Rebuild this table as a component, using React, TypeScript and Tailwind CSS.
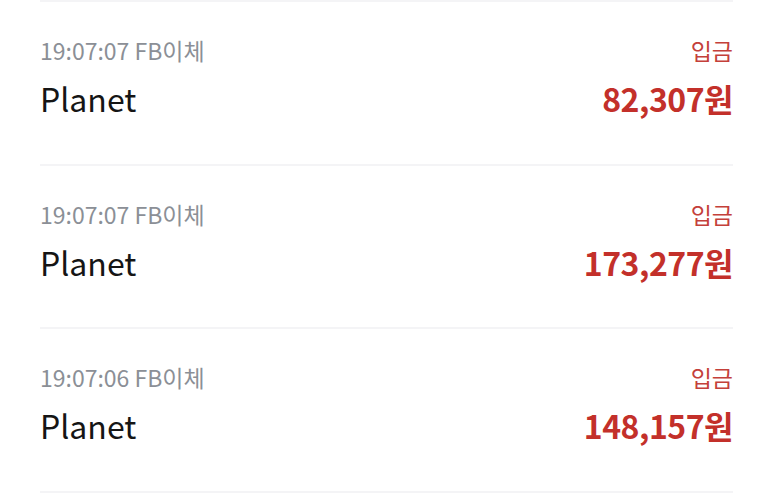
const rows = [
  { time: '19:07:07', name: 'Planet', amount: '82,307' },
  { time: '19:07:07', name: 'Planet', amount: '173,277' },
  { time: '19:07:06', name: 'Planet', amount: '148,157' },
];

export default function App() {
  return (
    <main
      className="h-[495px] w-[773px] overflow-hidden bg-white px-10"
      style={{ fontFamily: '"Noto Sans CJK KR", "Noto Sans", sans-serif' }}
    >
      <div className="border-t-2 border-[#f4f4f6]">
        {rows.map((r, i) => (
          <div key={i} className="flex h-[163.5px] flex-col border-b-2 border-[#f4f4f6] pt-[34px]">
            <div className="flex items-center justify-between text-[23px] leading-[28px]">
              <span className="text-[#8b8f96]">{r.time} FB이체</span>
              <span className="text-[#c4403a]">입금</span>
            </div>
            <div className="mt-[14px] flex items-center justify-between leading-[40px]">
              <span className="text-[32px] text-[#151515]">{r.name}</span>
              <span className="text-[32px] font-bold tracking-[-0.5px] text-[#c3302a]">{r.amount}원</span>
            </div>
          </div>
        ))}
      </div>
    </main>
  );
}
